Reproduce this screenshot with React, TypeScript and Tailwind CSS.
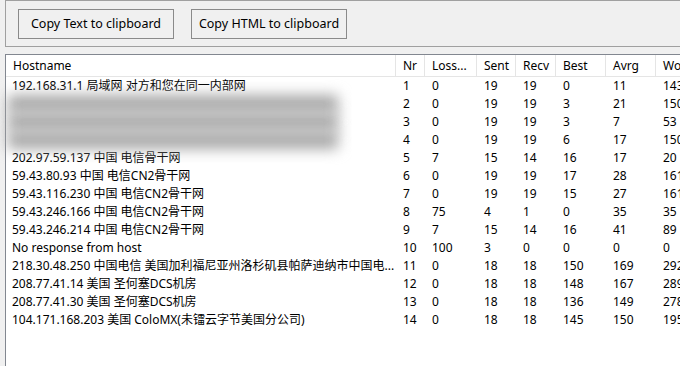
const font = { fontFamily: '"Noto Sans", "Noto Sans CJK SC", sans-serif' };

type Row = { host: string; v: (string | number)[]; blur?: boolean };

const rows: Row[] = [
  { host: "192.168.31.1 局域网 对方和您在同一内部网", v: [1, 0, 19, 19, 0, 11, 143] },
  { host: "", v: [2, 0, 19, 19, 3, 21, 150], blur: true },
  { host: "", v: [3, 0, 19, 19, 3, 7, 53], blur: true },
  { host: "", v: [4, 0, 19, 19, 6, 17, 150], blur: true },
  { host: "202.97.59.137 中国 电信骨干网", v: [5, 7, 15, 14, 16, 17, 20] },
  { host: "59.43.80.93 中国 电信CN2骨干网", v: [6, 0, 19, 19, 17, 28, 161] },
  { host: "59.43.116.230 中国 电信CN2骨干网", v: [7, 0, 19, 19, 15, 27, 161] },
  { host: "59.43.246.166 中国 电信CN2骨干网", v: [8, 75, 4, 1, 0, 35, 35] },
  { host: "59.43.246.214 中国 电信CN2骨干网", v: [9, 7, 15, 14, 16, 41, 89] },
  { host: "No response from host", v: [10, 100, 3, 0, 0, 0, 0] },
  { host: "218.30.48.250 中国电信 美国加利福尼亚州洛杉矶县帕萨迪纳市中国电...", v: [11, 0, 18, 18, 150, 169, 292] },
  { host: "208.77.41.14 美国 圣何塞DCS机房", v: [12, 0, 18, 18, 148, 167, 289] },
  { host: "208.77.41.30 美国 圣何塞DCS机房", v: [13, 0, 18, 18, 136, 149, 278] },
  { host: "104.171.168.203 美国 ColoMX(未镭云字节美国分公司)", v: [14, 0, 18, 18, 145, 150, 195] },
];

const headers = ["Hostname", "Nr", "Loss...", "Sent", "Recv", "Best", "Avrg", "Worst"];
const cols = "grid grid-cols-[390px_29px_52px_39px_40px_50px_50px_80px]";

export default function App() {
  return (
    <div
      className="w-[680px] h-[366px] overflow-hidden bg-[#f0f0f0] text-[12px] text-black"
      style={font}
    >
      <div className="w-[720px] pl-[5px]">
        {/* Button bar */}
        <div className="h-[47px] border border-[#a0a0a0] flex items-start gap-[17px] pl-[12px] pt-[8px]">
          <button className="w-[156px] h-[30px] border border-[#8a8a8a] bg-[#f0f0f0] leading-none text-[12.5px]">
            Copy Text to clipboard
          </button>
          <button className="w-[156px] h-[30px] border border-[#8a8a8a] bg-[#f0f0f0] leading-none text-[12.5px]">
            Copy HTML to clipboard
          </button>
        </div>

        {/* Result list */}
        <div className="mt-[7px] h-[330px] border border-[#828790] bg-white">
          <div className={`${cols} h-[22px] border-b border-[#e5e5e5]`}>
            {headers.map((h) => (
              <div
                key={h}
                className="border-r border-[#e5e5e5] pl-[7px] pt-[1px] flex items-center whitespace-nowrap overflow-hidden"
              >
                {h}
              </div>
            ))}
          </div>
          {rows.map((r, i) => (
            <div key={i} className={`${cols} h-[18px] items-center`}>
              <div className="pl-[6px] pr-[2px] whitespace-nowrap">
                {r.blur ? (
                  <div className="h-[18px] w-[330px] -ml-[4px] bg-[#a8a8a8] blur-[7px]" />
                ) : (
                  <div className="overflow-hidden">{r.host}</div>
                )}
              </div>
              {r.v.map((n, j) => (
                <div key={j} className="pl-[7px] whitespace-nowrap">
                  {n}
                </div>
              ))}
            </div>
          ))}
        </div>
      </div>
    </div>
  );
}
